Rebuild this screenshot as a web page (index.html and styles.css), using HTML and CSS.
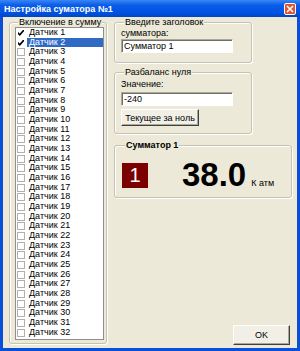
FILE: index.html
```html
<!DOCTYPE html>
<html lang="ru">

<head>
    <meta charset="UTF-8">
    <title>Настройка суматора №1</title>
    <link rel="stylesheet" href="styles.css">
</head>

<body>
    <div class="window">
        <div class="titlebar">
            <span class="title">Настройка суматора №1</span>
            <span class="close">
                <svg width="8" height="8" viewBox="0 0 8 8">
                    <path d="M1 1 L7 7 M7 1 L1 7" stroke="#fff" stroke-width="1.6" />
                </svg>
            </span>
        </div>

        <div class="client">
            <!-- sensors included in the sum -->
            <fieldset class="group sensors">
                <legend>Включение в сумму</legend>
                <ul class="listbox">
                    <li class="item"><span class="check on"></span><span class="name">Датчик 1</span></li>
                    <li class="item"><span class="check on"></span><span class="name selected">Датчик 2</span></li>
                    <li class="item"><span class="check"></span><span class="name">Датчик 3</span></li>
                    <li class="item"><span class="check"></span><span class="name">Датчик 4</span></li>
                    <li class="item"><span class="check"></span><span class="name">Датчик 5</span></li>
                    <li class="item"><span class="check"></span><span class="name">Датчик 6</span></li>
                    <li class="item"><span class="check"></span><span class="name">Датчик 7</span></li>
                    <li class="item"><span class="check"></span><span class="name">Датчик 8</span></li>
                    <li class="item"><span class="check"></span><span class="name">Датчик 9</span></li>
                    <li class="item"><span class="check"></span><span class="name">Датчик 10</span></li>
                    <li class="item"><span class="check"></span><span class="name">Датчик 11</span></li>
                    <li class="item"><span class="check"></span><span class="name">Датчик 12</span></li>
                    <li class="item"><span class="check"></span><span class="name">Датчик 13</span></li>
                    <li class="item"><span class="check"></span><span class="name">Датчик 14</span></li>
                    <li class="item"><span class="check"></span><span class="name">Датчик 15</span></li>
                    <li class="item"><span class="check"></span><span class="name">Датчик 16</span></li>
                    <li class="item"><span class="check"></span><span class="name">Датчик 17</span></li>
                    <li class="item"><span class="check"></span><span class="name">Датчик 18</span></li>
                    <li class="item"><span class="check"></span><span class="name">Датчик 19</span></li>
                    <li class="item"><span class="check"></span><span class="name">Датчик 20</span></li>
                    <li class="item"><span class="check"></span><span class="name">Датчик 21</span></li>
                    <li class="item"><span class="check"></span><span class="name">Датчик 22</span></li>
                    <li class="item"><span class="check"></span><span class="name">Датчик 23</span></li>
                    <li class="item"><span class="check"></span><span class="name">Датчик 24</span></li>
                    <li class="item"><span class="check"></span><span class="name">Датчик 25</span></li>
                    <li class="item"><span class="check"></span><span class="name">Датчик 26</span></li>
                    <li class="item"><span class="check"></span><span class="name">Датчик 27</span></li>
                    <li class="item"><span class="check"></span><span class="name">Датчик 28</span></li>
                    <li class="item"><span class="check"></span><span class="name">Датчик 29</span></li>
                    <li class="item"><span class="check"></span><span class="name">Датчик 30</span></li>
                    <li class="item"><span class="check"></span><span class="name">Датчик 31</span></li>
                    <li class="item"><span class="check"></span><span class="name">Датчик 32</span></li>
                </ul>
            </fieldset>

            <div class="side">
                <fieldset class="group small">
                    <legend>Введите заголовок</legend>
                    <label class="caption" for="title">сумматора:</label>
                    <input class="field" id="title" value="Сумматор 1">
                </fieldset>

                <fieldset class="group small zero">
                    <legend>Разбаланс нуля</legend>
                    <label class="caption" for="zero">Значение:</label>
                    <input class="field" id="zero" value="-240">
                    <button class="btn current">Текущее за ноль</button>
                </fieldset>

                <fieldset class="group summ">
                    <legend>Сумматор 1</legend>
                    <div class="display">
                        <div class="badge">1</div>
                        <div class="reading">
                            <span class="value">38.0</span>
                            <span class="unit">К атм</span>
                        </div>
                    </div>
                </fieldset>

                <button class="btn ok">OK</button>
            </div>
        </div>
    </div>
</body>

</html>
```

FILE: styles.css
```css
* {
    padding: 0;
    margin: 0;
    box-sizing: border-box;
}

body {
    width: 300px;
    height: 351px;
    overflow: hidden;
    font-family: "Liberation Sans", Arial, sans-serif;
    font-size: 9px;
    color: #000;
}

.window {
    width: 300px;
    height: 351px;
    background: #0A4FD8;
    display: flex;
    flex-direction: column;
}

.titlebar {
    height: 17px;
    display: flex;
    align-items: center;
    justify-content: space-between;
    padding: 0 4px 0 4px;
    background: linear-gradient(#3A86F4, #0A5DE8 30%, #0054E2 70%, #0046C8);
    color: #fff;
    font-weight: bold;
    font-size: 9px;
}

.close {
    width: 12px;
    height: 12px;
    border: 1px solid #fff;
    border-radius: 2px;
    background: #E0532F;
    display: flex;
    align-items: center;
    justify-content: center;
}

.client {
    flex: 1;
    margin: 0 3px 3px;
    background: #ECE9D8;
    display: flex;
    gap: 7px;
    padding: 0 5px 4px 6px;
}

/* group boxes */
.group {
    border: 1px solid #C5C2B2;
    border-radius: 3px;
    box-shadow: 1px 1px 0 #fff, inset 1px 1px 0 #fff;
    min-width: 0;
}

.group legend {
    line-height: 11px;
    padding: 0 1px;
    margin-left: 3px;
    background: #ECE9D8;
}

.sensors {
    width: 98px;
    display: flex;
    flex-direction: column;
    padding: 0 2px 3px 5px;
}

.listbox {
    flex: 1;
    list-style: none;
    background: #fff;
    border: 1px solid #8E8F8F;
    margin-top: -1px;
}

.item {
    height: 9.68px;
    display: flex;
    align-items: center;
}

.check {
    width: 8px;
    height: 8px;
    margin-left: 1px;
    border: 1px solid #B0B0B0;
    background: #fff;
}

.check.on {
    border-color: #fff;
    background: url("data:image/svg+xml;utf8,<svg xmlns='http://www.w3.org/2000/svg' width='8' height='8'><path d='M0.5 3.5 L2.8 5.8 L7 1' fill='none' stroke='black' stroke-width='1.7'/></svg>") center no-repeat;
}

.name {
    flex: 1;
    margin-left: 2px;
    padding: 0 2px;
    line-height: 9.68px;
}

.name.selected {
    background: #316AC5;
    color: #fff;
}

/* right side */
.side {
    flex: 1;
    display: flex;
    flex-direction: column;
}

.small {
    width: 138px;
    display: flex;
    flex-direction: column;
    align-items: flex-start;
    padding: 0 0 9px 6px;
}

.caption {
    line-height: 10px;
}

.field {
    width: 112px;
    height: 14px;
    margin-top: 1px;
    padding: 0 2px;
    font: inherit;
    background: #fff;
    border: 1px solid;
    border-color: #ACA899 #fff #fff #ACA899;
    box-shadow: inset 1px 1px 0 #716F64;
    outline: none;
}

.zero {
    margin-top: 4px;
    padding-bottom: 7px;
}

.zero .caption {
    margin-top: 1px;
}

.zero .field {
    margin-top: 3px;
}

.btn {
    font: inherit;
    background: #F1EFE6;
    border: 1px solid;
    border-color: #fff #404040 #404040 #fff;
    box-shadow: inset -1px -1px 0 #ACA899;
}

.current {
    width: 78px;
    height: 17px;
    margin-top: 3px;
}

.summ {
    margin-top: 6px;
    padding: 8px 0 6px 7px;
}

.summ legend {
    font-weight: bold;
}

.display {
    display: flex;
    align-items: center;
}

.badge {
    width: 26px;
    height: 25px;
    background: #7B0000;
    color: #fff;
    font-size: 20px;
    line-height: 25px;
    text-align: center;
}

.reading {
    display: flex;
    align-items: baseline;
    margin-left: 34px;
}

.value {
    font-size: 33px;
    font-weight: bold;
    line-height: 32px;
}

.unit {
    margin-left: 5px;
}

.ok {
    margin-top: auto;
    align-self: flex-end;
    width: 57px;
    height: 20px;
    margin-right: 2px;
    margin-bottom: -1px;
}
```
